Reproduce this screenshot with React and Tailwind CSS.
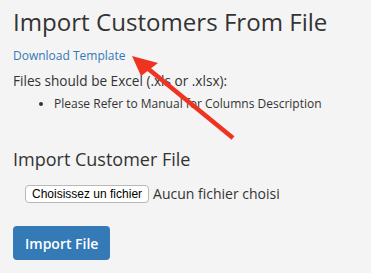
export default function App() {
  return (
    <div className="relative h-[273px] w-[371px] overflow-hidden bg-[#f4f4f4] pl-[13px] font-['Open_Sans',sans-serif] text-[#333]">
      <h1 className="pt-[7px] text-[24.1px] leading-[30px]">Import Customers From File</h1>
      <a href="#" className="mt-[11px] block text-[12px] leading-[16px] text-[#337ab7]">
        Download Template
      </a>
      <p className="mt-[7px] text-[13.6px] leading-[20px]">Files should be Excel (.xls or .xlsx):</p>
      <ul className="mt-[4px] list-disc pl-[41px] text-[12px] leading-[18px]">
        <li>Please Refer to Manual for Columns Description</li>
      </ul>
      <h2 className="mt-[35px] text-[18px] leading-[22px]">Import Customer File</h2>
      <div className="mt-[14px] flex items-center gap-[4px] pl-[12px]">
        <button className="h-[18px] rounded-[4px] border border-[#b8b8b8] bg-white px-[6px] font-['Liberation_Sans',sans-serif] text-[12px] leading-[16px] text-black">
          Choisissez un fichier
        </button>
        <span className="text-[14px] leading-[20px]">Aucun fichier choisi</span>
      </div>
      <button className="mt-[22px] h-[34px] rounded-[4px] bg-[#337ab7] px-[12px] text-[14px] font-semibold text-white">
        Import File
      </button>
      <svg className="pointer-events-none absolute left-0 top-0" width="371" height="273" viewBox="0 0 371 273">
        <line x1="233" y1="138" x2="146" y2="67" stroke="#f03320" strokeWidth="4.5" strokeLinecap="butt" />
        <polygon points="132,56 158,63 141,76" fill="#f03320" />
      </svg>
    </div>
  );
}
